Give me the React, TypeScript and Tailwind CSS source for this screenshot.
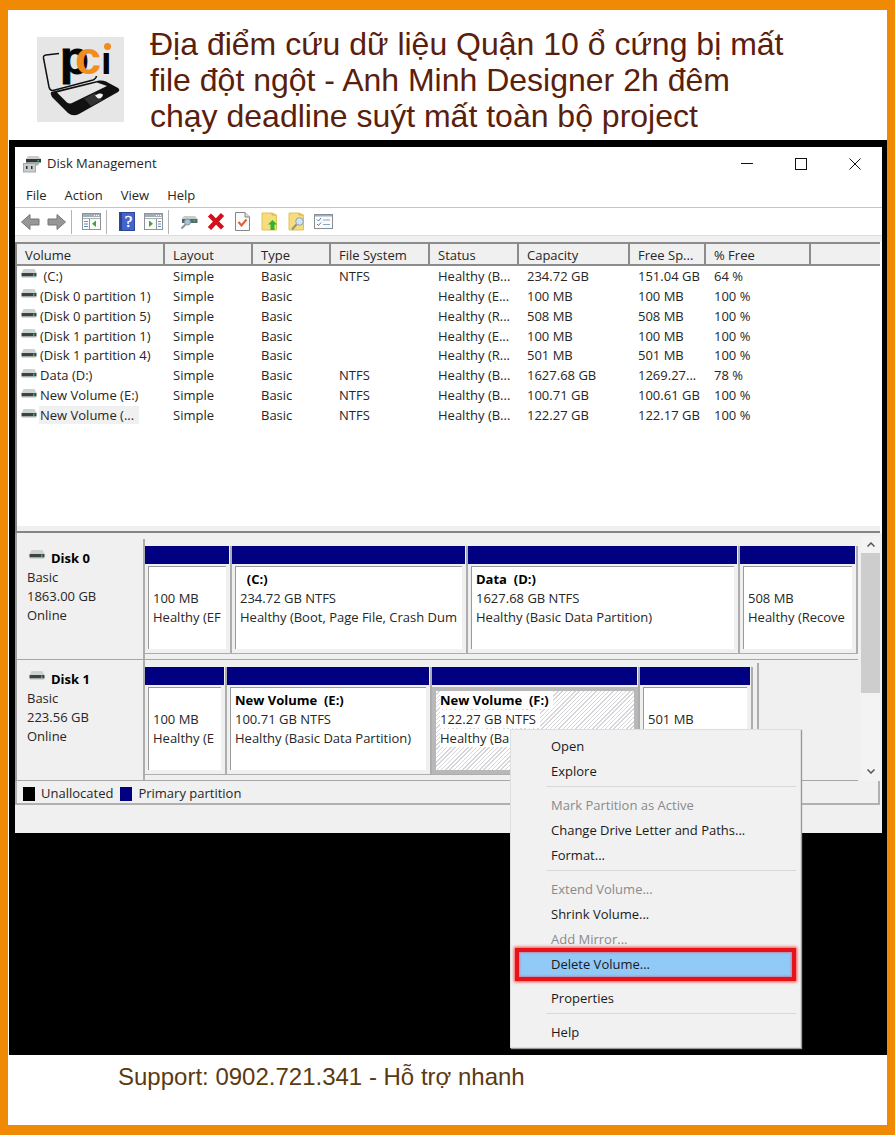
import type { ReactNode } from "react";

interface Volume {
  name: string;
  fs: string;
  status: string;
  capacity: string;
  free: string;
  percent: string;
  selected?: boolean;
}

interface PartitionInfo {
  title?: string;
  size: string;
  status: string;
  selected?: boolean;
}

interface DiskInfo {
  name: string;
  size: string;
  gridClass: string;
  partitions: PartitionInfo[];
  hasTail?: boolean;
}

interface MenuEntry {
  label: string;
  disabled?: boolean;
  marked?: boolean;
}

const columns = [
  { label: "Volume", className: "w-[148px]" },
  { label: "Layout", className: "w-[88px]" },
  { label: "Type", className: "w-[78px]" },
  { label: "File System", className: "w-[99px]" },
  { label: "Status", className: "w-[89px]" },
  { label: "Capacity", className: "w-[111px]" },
  { label: "Free Sp...", className: "w-[76px]" },
  { label: "% Free", className: "w-[105px]" },
];

const volumes: Volume[] = [
  { name: "\u00a0(C:)", fs: "NTFS", status: "Healthy (B...", capacity: "234.72 GB", free: "151.04 GB", percent: "64 %" },
  { name: "(Disk 0 partition 1)", fs: "", status: "Healthy (E...", capacity: "100 MB", free: "100 MB", percent: "100 %" },
  { name: "(Disk 0 partition 5)", fs: "", status: "Healthy (R...", capacity: "508 MB", free: "508 MB", percent: "100 %" },
  { name: "(Disk 1 partition 1)", fs: "", status: "Healthy (E...", capacity: "100 MB", free: "100 MB", percent: "100 %" },
  { name: "(Disk 1 partition 4)", fs: "", status: "Healthy (R...", capacity: "501 MB", free: "501 MB", percent: "100 %" },
  { name: "Data (D:)", fs: "NTFS", status: "Healthy (B...", capacity: "1627.68 GB", free: "1269.27...", percent: "78 %" },
  { name: "New Volume (E:)", fs: "NTFS", status: "Healthy (B...", capacity: "100.71 GB", free: "100.61 GB", percent: "100 %" },
  { name: "New Volume (...", fs: "NTFS", status: "Healthy (B...", capacity: "122.27 GB", free: "122.17 GB", percent: "100 %", selected: true },
];

const disks: DiskInfo[] = [
  {
    name: "Disk 0",
    size: "1863.00 GB",
    gridClass: "grid-cols-[87fr_236fr_272fr_118fr]",
    partitions: [
      { size: "100 MB", status: "Healthy (EF" },
      { title: "\u00a0\u00a0(C:)", size: "234.72 GB NTFS", status: "Healthy (Boot, Page File, Crash Dum" },
      { title: "Data\u00a0 (D:)", size: "1627.68 GB NTFS", status: "Healthy (Basic Data Partition)" },
      { size: "508 MB", status: "Healthy (Recove" },
    ],
  },
  {
    name: "Disk 1",
    size: "223.56 GB",
    gridClass: "grid-cols-[82fr_205fr_208fr_113fr_105fr]",
    hasTail: true,
    partitions: [
      { size: "100 MB", status: "Healthy (E" },
      { title: "New Volume\u00a0 (E:)", size: "100.71 GB NTFS", status: "Healthy (Basic Data Partition)" },
      { title: "New Volume\u00a0 (F:)", size: "122.27 GB NTFS", status: "Healthy (Ba", selected: true },
      { size: "501 MB", status: "" },
    ],
  },
];

const menuGroups: MenuEntry[][] = [
  [{ label: "Open" }, { label: "Explore" }],
  [
    { label: "Mark Partition as Active", disabled: true },
    { label: "Change Drive Letter and Paths..." },
    { label: "Format..." },
  ],
  [
    { label: "Extend Volume...", disabled: true },
    { label: "Shrink Volume..." },
    { label: "Add Mirror...", disabled: true },
    { label: "Delete Volume...", marked: true },
  ],
  [{ label: "Properties" }],
  [{ label: "Help" }],
];

function Logo() {
  return (
    <svg viewBox="0 0 87 85" className="h-[85px] w-[87px] shrink-0" role="img" aria-label="pci">
      <rect width="87" height="85" fill="#e6e6e6" />
      <path d="M22 16.500 L9 18 Q6 18.500 6.500 21 L12 50 Q13 54 16 53.500 L56 43 Q59 42 59.500 39" fill="none" stroke="#111" strokeWidth="1.500" />
      <path d="M14 55 L62 43.500 Q66 43 69 44.500 L81 51 Q83.500 53 81 55 L42 77 Q36 80 31 76 L15 60 Q13 57 14 55Z" fill="#111" />
      <path d="M20 55.500 L60 45.500 L70 49 L36 65.500 Q33 67.500 30 65.500Z" fill="#e6e6e6" />
      <path d="M47 61.500 L54 69 L65 63 L58 56Z" fill="#333" />
      <path d="M58 58.500 L62 56.500 Q66 56 66 58 L65 60 Q64 61.500 61 61.500Z" fill="#f5f5f5" />
      <g fontFamily="'Liberation Sans', Arial, sans-serif" fontWeight="700">
        <text x="23" y="37" fontSize="47" fill="#050505" stroke="#050505">p</text>
        <text x="64" y="37" fontSize="38" fill="#050505">i</text>
        <text x="38" y="37" fontSize="47" fill="#f28c1c">c</text>
      </g>
      <rect x="65" y="4" width="12" height="11" fill="#e6e6e6" />
      <circle cx="70.500" cy="9.500" r="3.500" fill="#f28c1c" />
    </svg>
  );
}

function DriveIcon({ className = "" }: { className?: string }) {
  return (
    <svg viewBox="0 0 16 9" className={`h-[9px] w-4 shrink-0 ${className}`} aria-hidden="true">
      <path d="M2.500 0 H13.500 L15.500 4 H0.500Z" fill="#cdd2d2" />
      <rect x="0.500" y="4" width="15" height="3.500" fill="#3c4443" />
      <path d="M1 8 H15" stroke="#b5b8b8" />
      <rect x="12" y="4.500" width="1.500" height="2.500" fill="#2fae74" />
    </svg>
  );
}

function AppIcon() {
  return (
    <svg viewBox="0 0 18 18" className="h-[18px] w-[18px]" aria-hidden="true">
      <path d="M5 1 H15 L18 4 H3Z" fill="#c9cccc" />
      <rect x="3" y="4" width="15" height="3.500" fill="#303837" />
      <rect x="14.500" y="5" width="1.500" height="1.500" fill="#41b883" />
      <path d="M6 7.500 H17 L15 10.500 H12Z" fill="#aeb1b1" />
      <rect x="0.500" y="8.500" width="12" height="8.500" fill="#c9cccd" stroke="#a5a8a9" />
      <rect x="3" y="11" width="1.500" height="3" fill="#26323a" />
      <rect x="8" y="11" width="1.500" height="3" fill="#26323a" />
    </svg>
  );
}

function ArrowIcon({ forward }: { forward?: boolean }) {
  return (
    <svg viewBox="0 0 20 18" className="h-[18px] w-5" aria-hidden="true">
      <path
        d={forward ? "M1 6 H10 V1.500 L18.500 9 L10 16.500 V12 H1Z" : "M19 6 H10 V1.500 L1.500 9 L10 16.500 V12 H19Z"}
        fill="#979797"
        stroke="#777"
        strokeLinejoin="round"
      />
    </svg>
  );
}

function PaneIcon({ flipped }: { flipped?: boolean }) {
  return (
    <svg viewBox="0 0 19 17" className="h-[17px] w-[19px]" aria-hidden="true">
      <rect x="0.500" y="0.500" width="18" height="16" fill="#fbfbfb" stroke="#8d9499" />
      <rect x="1" y="1" width="17" height="3" fill="#a3adb5" />
      <path d="M12 2.500 H17" stroke="#fff" strokeDasharray="1 1" />
      <path d="M1 5.500 H18" stroke="#a8afb5" />
      {flipped ? (
        <>
          <path d="M12.500 6 V16" stroke="#8d9499" />
          <path d="M14 8.500 H17 M14 11 H17 M14 13.500 H17" stroke="#6d8fb5" />
          <path d="M5 7.500 L9 10.700 L5 14Z" fill="#39a935" />
        </>
      ) : (
        <>
          <path d="M7.500 6 V16" stroke="#8d9499" />
          <path d="M2 8.500 H6 M2 11 H6 M2 13.500 H6" stroke="#6d8fb5" />
          <path d="M14 7.500 L10 10.700 L14 14Z" fill="#39a935" />
        </>
      )}
    </svg>
  );
}

function HelpIcon() {
  return (
    <svg viewBox="0 0 16 19" className="h-[19px] w-4" aria-hidden="true">
      <rect x="0.500" y="0.500" width="15" height="18" fill="#4264cb" stroke="#2f4799" />
      <rect x="1" y="1" width="2" height="17" fill="#2b4192" />
      <text x="9.500" y="15" textAnchor="middle" fontFamily="'Liberation Serif', serif" fontSize="17" fill="#fff" stroke="#fff" strokeWidth="0.400">?</text>
    </svg>
  );
}

function DriveSearchIcon() {
  return (
    <svg viewBox="0 0 18 16" className="h-4 w-[18px]" aria-hidden="true">
      <path d="M4 2 H15 L17.500 5 H1.500Z" fill="#c6cbcb" />
      <rect x="2" y="5" width="15.500" height="4" fill="#5b6766" />
      <rect x="13" y="6" width="2.500" height="1.500" fill="#2fae74" />
      <circle cx="7.500" cy="8" r="3" fill="#a9c4d6" stroke="#7e95a3" />
      <path d="M5.500 10.500 L1.500 14.500" stroke="#8b9399" strokeWidth="2" />
    </svg>
  );
}

function DeleteIcon() {
  return (
    <svg viewBox="0 0 18 17" className="h-[17px] w-[18px]" aria-hidden="true">
      <path d="M2.500 2 L15.500 15 M15.500 1.500 L2.500 15.500" stroke="#d10f1d" strokeWidth="4.500" />
    </svg>
  );
}

function CheckDocIcon() {
  return (
    <svg viewBox="0 0 15 19" className="h-[19px] w-[15px]" aria-hidden="true">
      <path d="M0.500 0.500 H10 L14.500 5 V18.500 H0.500Z" fill="#fafafa" stroke="#868686" />
      <path d="M10 0.500 V5 H14.500" fill="#ddd" stroke="#868686" />
      <path d="M3.500 10 L6.500 13.500 L11.500 7.500" fill="none" stroke="#e8592e" strokeWidth="2" />
    </svg>
  );
}

function FolderIcon({ search }: { search?: boolean }) {
  return (
    <svg viewBox="0 0 17 19" className="h-[19px] w-[17px]" aria-hidden="true">
      <path d="M1 1 H11 L15.500 3 V18 H1Z" fill="#f7dc7e" stroke="#e2c25c" />
      <path d="M11 1 V3 H15" fill="none" stroke="#d3b04b" />
      {search ? (
        <>
          <circle cx="11.500" cy="9.500" r="3.800" fill="#cfe4f2" stroke="#8ba2b1" />
          <path d="M8.500 12.500 L4 17.500" stroke="#8b9298" strokeWidth="2" />
        </>
      ) : (
        <path d="M11.500 8 L16 12.500 H13.500 V18 H9.500 V12.500 H7Z" fill="#2fb52c" />
      )}
    </svg>
  );
}

function TaskListIcon() {
  return (
    <svg viewBox="0 0 19 15" className="h-[15px] w-[19px]" aria-hidden="true">
      <rect x="0.500" y="0.500" width="18" height="14" fill="#fbfbfb" stroke="#878e93" />
      <rect x="1" y="1" width="17" height="1.500" fill="#a3adb5" />
      <path d="M3 5.500 L4.500 7 L7 4 M3 10 L4.500 11.500 L7 8.500" fill="none" stroke="#3e82c4" />
      <path d="M9 6 H16 M9 10.500 H16" stroke="#8aa6c0" />
    </svg>
  );
}

function ToolButton({ label, children }: { label: string; children: ReactNode }) {
  return (
    <button type="button" aria-label={label} className="flex h-6 w-[27px] items-center justify-center">
      {children}
    </button>
  );
}

function ToolDivider() {
  return <div className="ml-px mr-[6px] h-6 w-px bg-[#b4b4b4]" />;
}

function TitleBar() {
  return (
    <div className="flex h-[34px] items-center pl-2">
      <AppIcon />
      <h2 className="ml-[6px] flex-1">Disk Management</h2>
      <button type="button" aria-label="Minimize" className="flex h-full w-[54px] items-center justify-center">
        <svg viewBox="0 0 12 12" className="h-3 w-3">
          <path d="M0 5.500 H12" stroke="#111" />
        </svg>
      </button>
      <button type="button" aria-label="Maximize" className="flex h-full w-[54px] items-center justify-center">
        <svg viewBox="0 0 12 12" className="h-3 w-3">
          <rect x="0.500" y="0.500" width="11" height="11" fill="none" stroke="#111" />
        </svg>
      </button>
      <button type="button" aria-label="Close" className="flex h-full w-[54px] items-center justify-center">
        <svg viewBox="0 0 12 12" className="h-3 w-3">
          <path d="M0.500 0.500 L11.500 11.500 M11.500 0.500 L0.500 11.500" stroke="#111" />
        </svg>
      </button>
    </div>
  );
}

function Toolbar() {
  return (
    <div className="flex h-7 items-center border-b border-[#dcdcdc] pl-px">
      <ToolButton label="Back"><ArrowIcon /></ToolButton>
      <ToolButton label="Forward"><ArrowIcon forward /></ToolButton>
      <ToolDivider />
      <ToolButton label="Show console tree"><PaneIcon /></ToolButton>
      <ToolDivider />
      <ToolButton label="Help"><HelpIcon /></ToolButton>
      <ToolButton label="Show action pane"><PaneIcon flipped /></ToolButton>
      <ToolDivider />
      <ToolButton label="Rescan"><DriveSearchIcon /></ToolButton>
      <ToolButton label="Delete"><DeleteIcon /></ToolButton>
      <ToolButton label="Properties"><CheckDocIcon /></ToolButton>
      <ToolButton label="Open folder"><FolderIcon /></ToolButton>
      <ToolButton label="Explore folder"><FolderIcon search /></ToolButton>
      <ToolButton label="Settings"><TaskListIcon /></ToolButton>
    </div>
  );
}

function VolumeTable() {
  return (
    <table className="h-[183px] w-full table-fixed border-separate border-spacing-0 text-left leading-[18px] whitespace-nowrap">
      <thead>
        <tr className="h-6">
          {columns.map((c) => (
            <th
              key={c.label}
              scope="col"
              className={`${c.className} border-t-2 border-r-2 border-b-2 border-[#8c8c8c] bg-[#f0f0f0] p-0 pt-[2px] pl-2 font-normal`}
            >
              {c.label}
            </th>
          ))}
          <td className="border-t-2 border-b-2 border-[#8c8c8c] bg-[#f0f0f0] p-0" />
        </tr>
      </thead>
      <tbody>
        {volumes.map((v) => (
          <tr key={v.name}>
            <td className="p-0 pl-1">
              <div className="flex items-center gap-[2px]">
                <DriveIcon className="mb-1" />
                <span className={v.selected ? "bg-[#f0f0f0] px-px pr-[5px]" : "px-px"}>{v.name}</span>
              </div>
            </td>
            <td className="p-0 pl-2">Simple</td>
            <td className="p-0 pl-2">Basic</td>
            <td className="p-0 pl-2">{v.fs}</td>
            <td className="p-0 pl-2">{v.status}</td>
            <td className="p-0 pl-2">{v.capacity}</td>
            <td className="p-0 pl-2">{v.free}</td>
            <td className="p-0 pl-2">{v.percent}</td>
            <td className="p-0" />
          </tr>
        ))}
      </tbody>
    </table>
  );
}

function Partition({ part }: { part: PartitionInfo }) {
  const lineClass = part.selected ? "bg-white pr-1" : "";

  return (
    <div className="flex min-w-0 flex-col border-r-2 border-b border-[#adadad]">
      <div className="mr-px h-[18px] bg-[#000080]" />
      <div
        className={`mt-[2px] flex flex-1 ${
          part.selected ? "border-4 border-[#b8b8b8]" : "mr-1 mb-1 ml-[3px] border-t border-l border-[#999]"
        }`}
      >
        <div
          className={`min-w-0 flex-1 overflow-hidden whitespace-nowrap ${
            part.selected
              ? "bg-[repeating-linear-gradient(135deg,#fff_0,#fff_2px,#d6d6da_2px,#d6d6da_3px)] pl-1"
              : "bg-white pt-[3px] pl-1"
          }`}
        >
          <div className="h-[19px] font-bold text-black">
            <span className={lineClass}>{part.title}</span>
          </div>
          <div>
            <span className={lineClass}>{part.size}</span>
          </div>
          <div>
            <span className={lineClass}>{part.status}</span>
          </div>
        </div>
      </div>
    </div>
  );
}

function DiskRow({ disk }: { disk: DiskInfo }) {
  return (
    <div className="flex h-[121px] border-b border-[#a6a6a6] leading-[19px]">
      <div className="w-[128px] shrink-0 border-r-2 border-[#adadad] pt-[10px] pl-[10px]">
        <div className="flex items-start gap-[6px] pl-[2px] font-bold text-black">
          <DriveIcon className="mt-px" />
          {disk.name}
        </div>
        <div>Basic</div>
        <div>{disk.size}</div>
        <div>Online</div>
      </div>
      <div className={`grid min-w-0 flex-1 pt-[7px] pb-[5px] ${disk.gridClass}`}>
        {disk.partitions.map((p, i) => (
          <Partition key={i} part={p} />
        ))}
        {disk.hasTail && <div className="-mt-1 ml-1 border-l-2 border-[#adadad]" />}
      </div>
    </div>
  );
}

function ScrollBar() {
  return (
    <div className="flex w-[19px] shrink-0 flex-col bg-[#f3f3f3]">
      <button type="button" aria-label="Scroll up" className="flex h-[17px] items-center justify-center">
        <svg viewBox="0 0 8 5" className="h-[5px] w-2">
          <path d="M0.500 4.500 L4 1 L7.500 4.500" fill="none" stroke="#555" strokeWidth="1.500" />
        </svg>
      </button>
      <div className="h-[140px] bg-[#cdcdcd]" />
      <div className="flex-1" />
      <button type="button" aria-label="Scroll down" className="flex h-[19px] items-center justify-center">
        <svg viewBox="0 0 8 5" className="h-[5px] w-2">
          <path d="M0.500 0.500 L4 4 L7.500 0.500" fill="none" stroke="#555" strokeWidth="1.500" />
        </svg>
      </button>
    </div>
  );
}

function ContextMenu() {
  return (
    <div
      role="menu"
      className="absolute top-[589px] left-[501px] w-[291px] border border-[#dedede] bg-[#f1f1f1] pt-1 pb-[2px] shadow-[1px_1px_1px_#999]"
    >
      {menuGroups.map((group, i) => (
        <div key={i}>
          {i > 0 && (
            <div className="mr-1 ml-[35px] h-[9px] pt-[2px]">
              <div className="h-px bg-[#d9d9d9]" />
            </div>
          )}
          {group.map((entry) => (
            <div key={entry.label} className="px-2">
              <button
                type="button"
                role="menuitem"
                disabled={entry.disabled}
                className={`block h-[25px] w-full pl-8 text-left leading-[25px] ${
                  entry.marked
                    ? "relative bg-[#91c9f7] shadow-[inset_0_0_2px_1px_#b98aa8,0_0_0_4px_#ea1218,0_0_3px_5px_#f04a4a]"
                    : ""
                } ${entry.disabled ? "text-[#8a8a8a]" : "text-[#1a1a1a]"}`}
              >
                {entry.label}
              </button>
            </div>
          ))}
        </div>
      ))}
    </div>
  );
}

export default function App() {
  return (
    <main className="border-x-8 border-y-10 border-[#f08a05] bg-white font-['Liberation_Sans',Arial,sans-serif]">
      <header className="flex h-[130px] items-start pt-[27px] pl-[29px]">
        <Logo />
        <h1 className="-mt-[11px] ml-[26px] max-w-[650px] text-[32px] leading-[36px] text-[#5a200b]">
          Địa điểm cứu dữ liệu Quận 10 ổ cứng bị mất file đột ngột - Anh Minh Designer 2h đêm chạy deadline suýt mất toàn bộ project
        </h1>
      </header>

      <section className="relative ml-px bg-black pt-[7px] pr-[5px] pb-[222px] pl-[6px] font-['Open_Sans','Noto_Sans',sans-serif] text-[13px] text-[#262626]">
        <div className="bg-white">
          <TitleBar />
          <nav className="flex h-[27px] items-center gap-[18px] border-b border-[#c4c4c4] pt-[3px] pl-[11px]">
            <button type="button">File</button>
            <button type="button">Action</button>
            <button type="button">View</button>
            <button type="button">Help</button>
          </nav>
          <Toolbar />
          <div className="h-[6px] bg-[#f0f0f0]" />
          <div className="mr-[2px] h-[291px] border-b-2 border-l-2 border-[#858585]">
            <div className="flex h-full flex-col">
              <VolumeTable />
              <div className="flex-1" />
              <div className="h-[5px] bg-[#f0f0f0]" />
            </div>
          </div>
          <div className="bg-[#f0f0f0] pr-[2px]">
            <div className="flex border-l-2 border-[#9a9a9a] pt-[3px]">
              <div className="min-w-0 flex-1 pt-[3px]">
                {disks.map((d) => (
                  <DiskRow key={d.name} disk={d} />
                ))}
              </div>
              <div className="w-[3px]" />
              <ScrollBar />
            </div>
            <div className="flex h-6 items-center border-r-2 border-b-2 border-l-2 border-[#b0b0b0] pt-1 pl-[6px]">
              <span className="h-[14px] w-3 bg-black" />
              <span className="ml-[6px]">Unallocated</span>
              <span className="ml-[7px] h-[14px] w-3 bg-[#000080]" />
              <span className="ml-[6px]">Primary partition</span>
            </div>
            <div className="h-7" />
          </div>
        </div>
        <ContextMenu />
      </section>

      <footer className="h-[70px] pt-2 pl-[110px] text-[24px] leading-[28px] text-[#5a3a10]">
        Support: 0902.721.341 - Hỗ trợ nhanh
      </footer>
    </main>
  );
}
